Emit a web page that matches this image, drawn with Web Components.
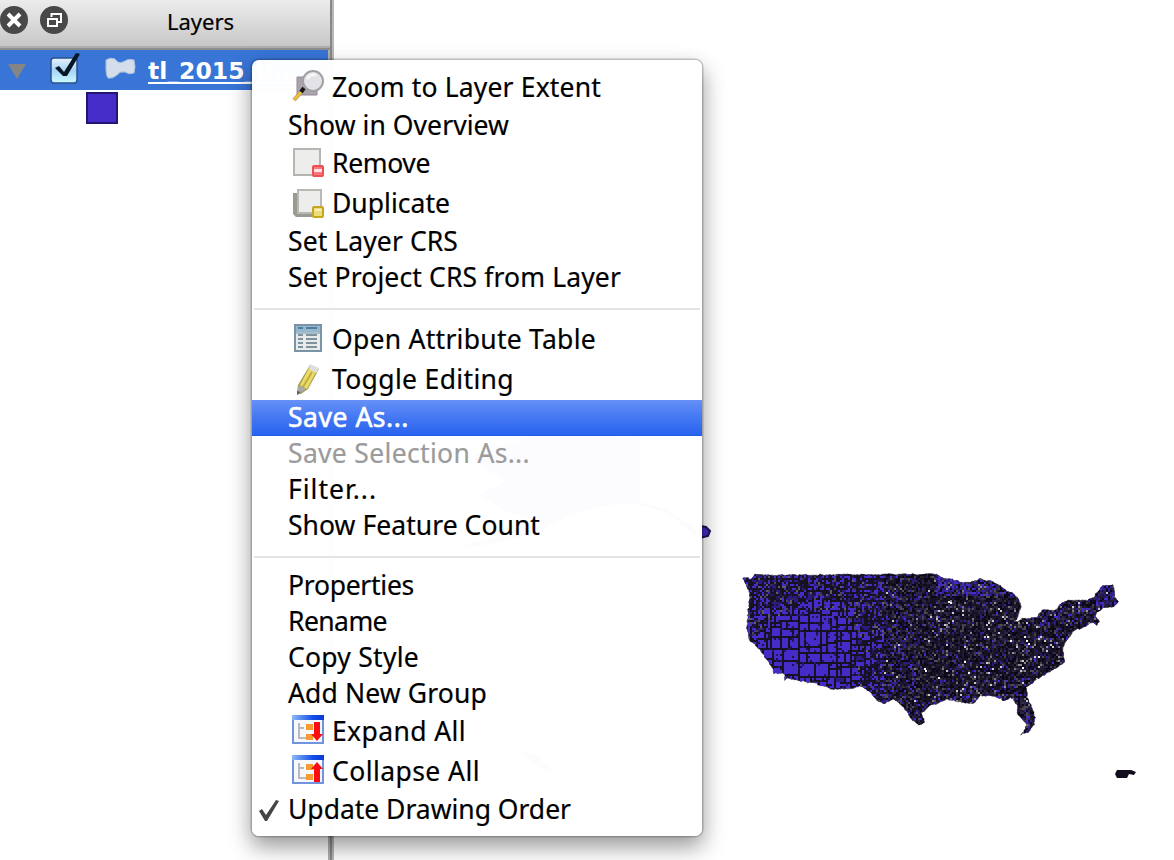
<!DOCTYPE html>
<html lang="en"><head><meta charset="utf-8"><title>Layers</title>
<style>
html,body{margin:0;height:100%;background:#fff;overflow:hidden}
body{font-family:"Noto Sans","Open Sans",sans-serif;color:#000}
</style></head><body>
<gis-window></gis-window>
<script>
const define=(name,html,init)=>customElements.define(name,class extends HTMLElement{
  constructor(){super();this.attachShadow({mode:'open'}).innerHTML=html;}
  connectedCallback(){if(init)init.call(this,this.shadowRoot);}
});

/* Text run whose tracking is adjusted to a given advance width */
define('fit-text',`<style>:host{display:inline-block;white-space:pre;line-height:1}span{display:inline-block}</style><span><slot></slot></span>`,function(r){
  const s=r.querySelector('span'),w=+this.getAttribute('width');
  if(w){const n=s.getBoundingClientRect().width;s.style.letterSpacing=((w-n)/this.textContent.length)+'px';}
});

const icons={
zoom:`<path d="M5 6h20v18H5z" fill="#aaa3ab"/><path d="M5 6h20v18H5z" fill="none" stroke="#92899a" stroke-width="1"/><path d="M11 19 2 29" stroke="#b39a62" stroke-width="4"/><path d="M10 20 2 29" stroke="#f6bf35" stroke-width="2.5"/><path d="m9 21 3-4" stroke="#161618" stroke-width="4"/><circle cx="21" cy="10" r="10" fill="#e3e3e7" stroke="#a1a1a4" stroke-width="2"/><path d="M15 8q3-5 9-4" stroke="#f7f7fa" stroke-width="3" fill="none"/>`,
remove:`<path d="M2 2h26v26H2z" fill="#ededeb" stroke="#b5b5b1" stroke-width="2"/><rect x="21" y="19" width="10" height="10" rx="1" fill="#f5777a" stroke="#ef4f53" stroke-width="2"/><path d="M22 23.500h8" stroke="#ffe5e4" stroke-width="3"/>`,
duplicate:`<path d="M1 6h6v20h19v4H4l-3-3z" fill="#999b8f"/><path d="M6 3h23v23H6z" fill="#ededeb" stroke="#b8b9b4" stroke-width="2"/><rect x="21" y="20" width="10" height="10" rx="1" fill="#eedb7b" stroke="#c6a51f" stroke-width="2"/><path d="M23 23h6" stroke="#faf1c1" stroke-width="2"/>`,
table:`<path d="M3 2h26v26H3z" fill="#e8ebe9" stroke="#7894a6" stroke-width="2"/><path d="M4 3h24v6H4z" fill="#95b8cf"/><path d="M6 5h5m3 0h11" stroke="#4f7f9f" stroke-width="2"/><path d="M4 10h24" stroke="#a9bdc8" stroke-width="2"/><path d="M6 12h5m3 0h11M6 16h5m3 0h11M6 20h5m3 0h11M6 24h5m3 0h11" stroke="#7e929d" stroke-width="2"/>`,
pencil:`<path d="m18 2 9 4-11 20-7 5-4-1 1-8z" fill="#a69b4b"/><path d="m17 5 7 4-9 17-7-4z" fill="#eadc69"/><path d="m20 9-9 15" stroke="#c0ae42" stroke-width="2"/><path d="m18 1 9 4-2 5-8-4z" fill="#dedee0"/><path d="m7 22 7 4-8 6-1-1z" fill="#aaa"/><path d="m5 28 4 1-4 3z" fill="#626262"/>`,
tree:`<path d="M1 3h30v25H1z" fill="#f6f8fd" stroke="#7294dd" stroke-width="2"/><path d="M0 0h32v5H0z" fill="url(#g)"/><path d="M7 8v16m0-11h5m-5 10h7" fill="none" stroke="#b9b9b9" stroke-width="2"/><path d="M14 9h7v6h-7zM14 19h7v6h-7z" fill="#f59b32"/>`
};
define('menu-icon',`<style>:host{display:block;width:32px;height:32px;flex:none}svg{display:block;overflow:visible}</style><svg width="32" height="32" viewBox="0 0 32 32"><defs><linearGradient id="g"><stop stop-color="#8eb9f4"/><stop offset=".65" stop-color="#124fe7"/><stop offset="1" stop-color="#0a39d5"/></linearGradient></defs><g></g></svg>`,function(r){
  const n=this.getAttribute('name');
  r.querySelector('g').innerHTML=n==='expand'?icons.tree+'<path d="M22 7h6v12h3l-6 7-6-7h3z" fill="#fb0d12"/>':n==='collapse'?icons.tree+'<path d="M22 27h6V14h3l-6-7-6 7h3z" fill="#fb0d12"/>':icons[n];
});

define('menu-item',`<style>
:host{display:flex;align-items:center;height:36px;box-sizing:border-box;padding:0 0 2px 36px;font-size:26.5px;color:#000;position:relative}
:host([icon]){height:40px;padding-left:40px}
:host([disabled]){color:#9b9b9b}
:host([selected]){color:#fff;background:linear-gradient(#6690f7,#4377f2 50%,#2964ef 96%,#1c56e2)}
fit-text{-webkit-text-stroke:.2px currentColor}
:host([selected]) fit-text{-webkit-text-stroke:.6px #fff}
menu-icon{margin-right:8px}
.tick{position:absolute;left:6px;top:8px;display:none}:host([checked]) .tick{display:block}
</style><svg class="tick" width="22" height="22" viewBox="0 0 22 22"><path d="m1 11 3-2 4 6L18 0l3 1L9 21H7z" fill="#444"/></svg>`,function(r){
  const i=this.getAttribute('icon');
  if(i){const e=document.createElement('menu-icon');e.setAttribute('name',i);r.append(e);}
  const t=document.createElement('fit-text');t.setAttribute('width',this.getAttribute('width')-1);t.textContent=this.getAttribute('label');r.append(t);
});
define('menu-separator',`<style>:host{display:flex;align-items:center;height:24px;padding:0 2px}i{flex:1;height:2px;margin-top:1px;background:#e3e3e3}</style><i></i>`);

define('context-menu',`<style>
:host{display:flex;flex-direction:column;box-sizing:border-box;width:450px;height:776px;padding:8px 0;border-radius:7px;background:rgba(255,255,255,.985);box-shadow:0 0 0 1.500px rgba(0,0,0,.2),0 10px 22px 1px rgba(0,0,0,.4)}
</style><slot></slot>`);

define('layers-panel',`<style>
:host{display:flex;width:334px;height:100%;flex:none;background:#fff}
.main{width:328px}.edge{width:6px;background:linear-gradient(90deg,#b0b0b0 2px,#888 2px 4px,#b8b8b8 4px)}
header{height:50px;box-sizing:border-box;display:flex;align-items:center;background:linear-gradient(#ececec,#c6c6c6);border-bottom:2px solid #8e8e8e;box-shadow:inset 0 -2px #adadad;padding-bottom:8px;margin-right:-2px}
header svg{display:block;margin-right:12px}
header fit-text{font-size:22px;margin-left:87px;margin-top:1px;-webkit-text-stroke:.2px #000}
.row{height:40px;background:#3875d7;display:flex;align-items:center;color:#fff;overflow:hidden;white-space:nowrap}
.row svg{flex:none;display:block}
.name{font:bold 23.5px "DejaVu Sans","Noto Sans",sans-serif;line-height:1;border-bottom:2px solid #fff;height:22px;margin-top:3px}
.name fit-text{display:block;margin-top:0}
.sw{width:28px;height:28px;border:2px solid #251573;background:#452bc8;margin:2px 0 0 86px}
.main{position:relative}
</style><div class="main"><header>
<svg width="28" height="28" viewBox="0 0 28 28"><circle cx="14" cy="14" r="14" fill="#484848"/><path d="m8 8 12 12M20 8 8 20" stroke="#fff" stroke-width="4"/></svg>
<svg width="28" height="28" viewBox="0 0 28 28"><circle cx="14" cy="14" r="14" fill="#484848"/><path d="M11.500 11V8H21v8h-3" fill="none" stroke="#fff" stroke-width="2"/><rect x="8" y="13" width="9" height="7" fill="none" stroke="#fff" stroke-width="2"/></svg>
<fit-text width="67">Layers</fit-text></header>
<div class="row"><svg width="148" height="40" viewBox="0 0 148 40"><defs><linearGradient id="b" x2="0" y2="1"><stop stop-color="#e5f2fc"/><stop offset=".5" stop-color="#a5d4f8"/><stop offset="1" stop-color="#ccfaff"/></linearGradient></defs><path d="M8 14h18l-9 15z" fill="#858585"/><rect x="51" y="8" width="26" height="25" rx="3" fill="url(#b)" stroke="#2b508d" stroke-width="1.500"/><path d="m55 18 4-2 5 6L76 3l4 1-13 22h-4z" fill="#061726"/><path d="M106 10q4-3 9-1 3 5 8 3 5-4 11-2 2 7 0 13-5 2-9-1-5-1-8 3-4 4-9 3-2-3-2-8z" fill="#d4deea" stroke="#aac0df"/></svg><span class="name"><fit-text width="152">tl_2015_u...</fit-text></span></div>
<div class="sw"></div></div><div class="edge"></div>`);

define('map-canvas',`<style>:host{display:block;flex:1;height:100%;min-width:0}svg{display:block;width:100%;height:100%}</style>
<svg viewBox="334 0 840 860" preserveAspectRatio="none"><defs><clipPath id="us"><path id="shape"/></clipPath></defs>
<path d="M470 456l55-18 35-10 80 12v62l25 7 24 15 13 12-7-1-28-22-30-9-30 1-35 9-30 16-50 14-35 4 50-14 25-15-24-7-30-17 28-14-20-12z" fill="#452bc8"/>
<path d="M520 750l20 8 12 12-8 1-20-16z" fill="#452bc8"/>
<path d="M700 526l6 1 4 4-2 5-8 2z" fill="#452bc8" stroke="#21124f" stroke-width="2"/>
<path id="edge" fill="#171122" stroke="#5d5470" stroke-width="1" stroke-dasharray="2 1.500"/><g id="cells" clip-path="url(#us)" shape-rendering="crispEdges"></g>
<path d="M1117 770h14l5 2-2 3-5-1-2 4h-10l-2-4z" fill="#120c1c"/></svg>`,function(r){
  let seed=20157;const rnd=()=>{seed=(seed*1664525+1013904223)>>>0;return seed/4294967296;};
  const pts=[743,578,748,577,750,580,755,574,770,575,937,574,940,577,952,579,960,582,970,583,980,579,990,581,1000,586,1012,593,1018,598,1021,607,1019,615,1015,622,1023,619,1038,617,1042,610,1055,610,1062,603,1068,600,1087,600,1095,597,1097,592,1103,585,1113,585,1115,597,1119,602,1113,607,1103,608,1097,613,1096,617,1100,621,1097,625,1092,622,1083,628,1075,630,1068,638,1063,648,1064,662,1058,667,1047,673,1035,681,1026,688,1027,697,1032,707,1035,718,1033,727,1028,733,1021,734,1025,730,1026,723,1018,715,1017,705,1011,697,1003,701,995,696,980,696,975,703,963,703,947,699,930,706,922,713,924,723,919,725,912,720,903,707,893,699,884,704,877,701,870,692,862,686,850,689,833,689,813,683,795,680,788,677,785,680,784,674,773,673,772,667,762,653,750,640,747,627,748,610,750,593,745,583];
  let o='M'+pts[0]+' '+pts[1],px=pts[0],py=pts[1];
  for(let i=2;i<=pts.length;i+=2){const x=pts[i%pts.length],y=pts[(i+1)%pts.length],n=Math.max(1,Math.round(Math.hypot(x-px,y-py)/3));
    for(let k=1;k<=n;k++)o+='L'+(px+(x-px)*k/n+(rnd()-.5)*1.6).toFixed(1)+' '+(py+(y-py)*k/n+(rnd()-.5)*1.6).toFixed(1);px=x;py=y;}
  o+='z';r.getElementById('shape').setAttribute('d',o);r.getElementById('edge').setAttribute('d',o);
  const by={};const put=(c,x,y,w,h)=>{by[c]=(by[c]||'')+`M${x} ${y}h${w}v${h}h${-w}z`;};
  const pick=a=>a[Math.floor(rnd()*a.length)];
  /* large western counties: recursive splits, finer away from the Great Basin */
  const split=(x,y,w,h)=>{
    const d=Math.hypot((x+w/2-808)/54,(y+h/2-648)/44),m=d<.7?16:d<1.2?10:6;
    if(w>m||h>m&&h>4){ if(w>=h*(.6+rnd()*.9)&&w>4){const c=2*Math.round(w*(.25+rnd()*.5)/2);if(c>0&&c<w){split(x,y,c,h);split(x+c,y,w-c,h);return;}}
      const c=2*Math.round(h*(.25+rnd()*.5)/2);if(c>0&&c<h){split(x,y,w,c);split(x,y+c,w,h-c);return;}}
    if(w>2&&h>2)put(d<.9||rnd()<.72?'#452bc8':'#2c1b80',x,y,w-2,h-2);
  };
  split(744,576,142,130);
  for(let y=574;y<736;y+=2)for(let x=742;x<1120;x+=2){
    const q=rnd(),west=x<884;
    const core=Math.hypot((x-808)/54,(y-650)/42);
    if(west){
      if(core>1&&q<.22)put(pick(['#19122b','#211547','#261765','#171122']),x,y,2,2);
      else if(core>1&&q<.31)put(pick(['#4b4656','#37304b','#5f5b6c']),x,y,2,2);
      else if(q<.1)put(pick(['#261765','#1d1340']),x,y,2,2);
      else if(core>.9&&q>.93)put('#452bc8',x,y,2,2);
    }else{
      const north=(x>935&&y<596)||(x>1094&&y<606);
      const east=x>930;
      const pb=north?.46:y>692?.18:x<915?.17:x>1030&&y<625?.2:.07;
      if(q<pb)put(pick(['#452bc8','#33209a','#2b1b80']),x,y,2,2);
      else if(q<pb+.25)put(pick(['#241943','#2c2348','#231c2e']),x,y,2,2);
      else if(q<pb+.37)put(pick(['#454149','#4f4c55','#38343c']),x,y,2,2);
      else if(q<pb+(east&&y>604?.425:.382))put(pick(['#77757b','#8e8c92','#c9c8cc']),x,y,2,2);
      else if(q<pb+.62)put('#0c0718',x,y,2,2);
    }
  }
  for(const [x,y] of [[948,601],[950,602],[987,636],[1024,636],[1026,640],[1028,643],[1010,640],[964,661],[968,672],[925,670],[924,668],[1038,656],[1022,667],[938,677]])put('#f4f4f4',x,y,2,2);
  r.getElementById('cells').innerHTML=Object.entries(by).map(([c,d])=>`<path fill="${c}" d="${d}"/>`).join('');
});

const items=[['Zoom to Layer Extent',270,'icon="zoom"'],['Show in Overview',222],['Remove',99,'icon="remove"'],['Duplicate',119,'icon="duplicate"'],['Set Layer CRS',171],['Set Project CRS from Layer',334],0,
['Open Attribute Table',265,'icon="table"'],['Toggle Editing',183,'icon="pencil"'],['Save As...',122,'selected'],['Save Selection As...',243,'disabled'],['Filter...',90],['Show Feature Count',253],0,
['Properties',127],['Rename',100],['Copy Style',132],['Add New Group',200],['Expand All',135,'icon="expand"'],['Collapse All',149,'icon="collapse"'],['Update Drawing Order',284,'checked']];
define('gis-window',`<style>:host{display:flex;width:1174px;height:860px;position:relative;overflow:hidden}context-menu{position:absolute;left:252px;top:60px}</style>
<layers-panel></layers-panel><map-canvas></map-canvas><context-menu>${items.map(i=>i?`<menu-item label="${i[0]}" width="${i[1]}" ${i[2]||''}></menu-item>`:'<menu-separator></menu-separator>').join('')}</context-menu>`);
</script></body></html>
